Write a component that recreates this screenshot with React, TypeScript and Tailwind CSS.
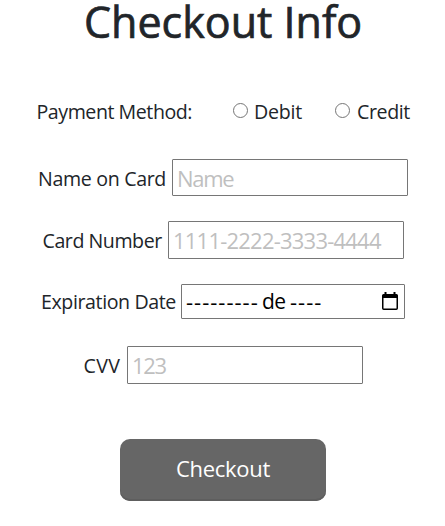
import React from 'react';

const label = 'shrink-0 whitespace-nowrap text-[19.6px] leading-[30px]';
const radio =
  'mt-[6px] mr-px ml-px h-[15px] w-[15px] shrink-0 appearance-none rounded-full border border-[#767676]';
const field =
  'shrink-0 rounded-[1px] border border-[#767676] bg-white pl-1 text-[22px] text-black outline-none placeholder:text-[#bfbfbf] placeholder:opacity-100';

function CalendarIcon() {
  return (
    <svg width="16" height="18" viewBox="0 0 16 18" aria-hidden="true">
      <path
        fillRule="evenodd"
        fill="#000"
        d="M2.500 0h2v2h7V0h2v2h1A1.500 1.500 0 0 1 16 3.500v12.800a1.700 1.700 0 0 1-1.700 1.700H1.700A1.700 1.700 0 0 1 0 16.300V3.500A1.500 1.500 0 0 1 1.500 2h1zM1.500 6v10.500h13V6z"
      />
    </svg>
  );
}

export default function App() {
  return (
    <main className="h-[526px] w-[445px] bg-white font-['Open_Sans','Noto_Sans',sans-serif] text-[#212529]">
      <h1 className="ml-[84px] h-[44px] whitespace-nowrap text-[43px] leading-[44px] font-medium tracking-[0px] [-webkit-text-stroke:0.7px_#212529]">
        Checkout Info
      </h1>
      <form>
        <div className="mt-[53px] flex h-[30px] pl-[36.5px]">
          <span className={`${label} w-[195.5px] tracking-[-0.45px]`}>Payment Method:</span>
          <label className="flex w-[102px] shrink-0">
            <input type="radio" name="method" className={radio} />
            <span className={`${label} ml-[5px] tracking-[-0.25px]`}>Debit</span>
          </label>
          <label className="flex shrink-0">
            <input type="radio" name="method" className={radio} />
            <span className={`${label} ml-[6px] tracking-[-0.4px]`}>Credit</span>
          </label>
        </div>
        <div className="mt-[32px] flex h-[37px] items-center pl-[38px]">
          <label className={`${label} mt-[2px] w-[134px] tracking-[-0.33px]`} htmlFor="name">Name on Card</label>
          <input id="name" placeholder="Name" className={`${field} h-[37px] w-[236px] tracking-[-1.3px]`} />
        </div>
        <div className="mt-[25px] flex h-[38px] items-center pl-[42.5px]">
          <label className={`${label} mt-[1px] w-[125.5px] tracking-[-0.45px]`} htmlFor="number">Card Number</label>
          <input id="number" placeholder="1111-2222-3333-4444" className={`${field} h-[38px] w-[236px] tracking-[-0.78px]`} />
        </div>
        <div className="mt-[25px] flex h-[35px] items-center pl-[41px]">
          <label className={`${label} w-[140px] tracking-[-0.4px]`}>Expiration Date</label>
          <div className={`${field} flex h-[35px] w-[224px] items-center pr-[6px]`}>
            <span className="w-[76px] whitespace-nowrap tracking-[1px]">---------</span>
            <span className="w-[28px] whitespace-nowrap text-[21px] tracking-[-0.6px]">de</span>
            <span className="whitespace-nowrap tracking-[1px]">----</span>
            <span className="mt-[-2px] ml-auto"><CalendarIcon /></span>
          </div>
        </div>
        <div className="mt-[27px] flex h-[38px] items-center pl-[83.5px]">
          <label className={`${label} mt-[1px] w-[43.5px] tracking-[0.4px]`} htmlFor="cvv">CVV</label>
          <input id="cvv" placeholder="123" className={`${field} h-[38px] w-[236px] tracking-[-1.3px]`} />
        </div>
        <button
          type="button"
          className="mt-[55px] ml-[120px] block h-[62px] w-[206px] rounded-[10px] bg-[#666] pb-[4px] text-[22px] tracking-[-0.3px] text-white shadow-[inset_0_-2px_0_#5e5e5e]"
        >
          Checkout
        </button>
      </form>
    </main>
  );
}
